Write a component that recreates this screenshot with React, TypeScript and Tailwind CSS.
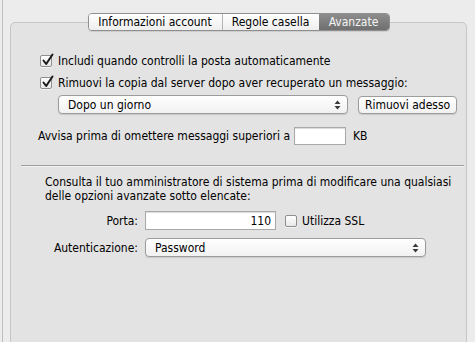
import React from "react";

const font = { fontFamily: '"DejaVu Sans Condensed", "Liberation Sans", sans-serif' };

const CheckBox = ({ checked }: { checked: boolean }) => (
    <span className="relative inline-block w-[12px] h-[12px] shrink-0 rounded-[2px] border border-[#8e8e8e] bg-gradient-to-b from-[#ffffff] to-[#e8e8e8] shadow-[0_1px_0_rgba(255,255,255,0.6)]">
        {checked && (
            <svg className="absolute left-[0px] top-[-3px]" width="14" height="14" viewBox="0 0 14 14">
                <path d="M2.5 7.5 L5.2 11 L11.5 1.5" fill="none" stroke="#1a1a1a" strokeWidth="2" strokeLinecap="round" strokeLinejoin="round" />
            </svg>
        )}
    </span>
);

const UpDown = () => (
    <svg width="7" height="10" viewBox="0 0 7 10" className="shrink-0">
        <path d="M0.5 4 L3.5 0.5 L6.5 4 Z" fill="#3a3a3a" />
        <path d="M0.5 6 L3.5 9.5 L6.5 6 Z" fill="#3a3a3a" />
    </svg>
);

const Select = ({ label, className }: { label: string; className: string }) => (
    <div className={`flex items-center justify-between h-[19px] pl-[9px] pr-[6px] rounded-[4px] border border-[#9c9c9c] bg-gradient-to-b from-[#ffffff] to-[#f1f1f1] shadow-[0_1px_1px_rgba(0,0,0,0.12)] ${className}`}>
        <span className="text-[12px] leading-none text-black">{label}</span>
        <UpDown />
    </div>
);

export default function App() {
    return (
        <div style={font} className="w-[475px] h-[342px] overflow-hidden bg-[#ececec] flex">
            {/* window edge */}
            <div className="w-[2px] shrink-0" />
            <div className="w-[1px] shrink-0 bg-[#bdbdbd]" />
            <div className="flex-1">
                {/* Panel */}
                <div className="mt-[22px] ml-[7px] w-[457px] h-[340px] rounded-[5px] border border-[#c6c6c6] bg-[#e3e3e3] text-[12px] text-black">
                    {/* Tabs */}
                    <div className="flex justify-center -mt-[10px]">
                        <div className="flex h-[18px] rounded-[4px] border border-[#8f8f8f] overflow-hidden shadow-[0_1px_1px_rgba(0,0,0,0.1)]">
                            <div className="w-[134px] flex items-center justify-center bg-gradient-to-b from-[#ffffff] to-[#eeeeee] border-r border-[#b5b5b5]">
                                Informazioni account
                            </div>
                            <div className="w-[96px] flex items-center justify-center bg-gradient-to-b from-[#ffffff] to-[#eeeeee]">
                                Regole casella
                            </div>
                            <div className="w-[70px] flex items-center justify-center bg-gradient-to-b from-[#8d8d8d] to-[#6f6f6f] text-[#f5f5f5]">
                                Avanzate
                            </div>
                        </div>
                    </div>

                    {/* Checkboxes */}
                    <div className="mt-[20px] pl-[29px] h-[20px] flex items-center gap-[6px]">
                        <CheckBox checked />
                        <span>Includi quando controlli la posta automaticamente</span>
                    </div>
                    <div className="mt-[2px] pl-[29px] h-[20px] flex items-center gap-[6px]">
                        <CheckBox checked />
                        <span>Rimuovi la copia dal server dopo aver recuperato un messaggio:</span>
                    </div>

                    {/* Remove options */}
                    <div className="mt-[2px] pl-[47px] flex items-center gap-[10px]">
                        <Select label="Dopo un giorno" className="w-[290px]" />
                        <button className="w-[99px] h-[18px] rounded-[4px] border border-[#9c9c9c] bg-gradient-to-b from-[#ffffff] to-[#f1f1f1] shadow-[0_1px_1px_rgba(0,0,0,0.12)] text-[12px] leading-none whitespace-nowrap">
                            Rimuovi adesso
                        </button>
                    </div>

                    {/* Size warning */}
                    <div className="mt-[13px] pl-[27px] flex items-center">
                        <span className="w-[256px] whitespace-nowrap">Avvisa prima di omettere messaggi superiori a</span>
                        <div className="w-[52px] h-[18px] border border-[#a9a9a9] bg-white shadow-[inset_0_1px_1px_rgba(0,0,0,0.15)]" />
                        <span className="ml-[7px]">KB</span>
                    </div>

                    {/* Separator */}
                    <div className="mt-[20px] ml-[10px] mr-[2px] h-[1px] bg-[#9e9e9e] shadow-[0_1px_0_#f2f2f2]" />

                    {/* Advanced */}
                    <div className="mt-[9px] pl-[34px] pr-[14px] leading-[14px]">
                        Consulta il tuo amministratore di sistema prima di modificare una qualsiasi delle opzioni avanzate sotto elencate:
                    </div>

                    <div className="mt-[8px] pl-[34px] flex items-center">
                        <span className="w-[93px] text-right">Porta:</span>
                        <div className="ml-[7px] w-[131px] h-[19px] border border-[#a9a9a9] bg-white shadow-[inset_0_1px_1px_rgba(0,0,0,0.15)] flex items-center justify-end pr-[4px]">
                            110
                        </div>
                        <span className="ml-[9px] flex">
                            <CheckBox checked={false} />
                        </span>
                        <span className="ml-[5px]">Utilizza SSL</span>
                    </div>

                    <div className="mt-[8px] pl-[34px] flex items-center">
                        <span className="w-[93px] text-right">Autenticazione:</span>
                        <Select label="Password" className="ml-[7px] w-[281px]" />
                    </div>
                </div>
            </div>
        </div>
    );
}
